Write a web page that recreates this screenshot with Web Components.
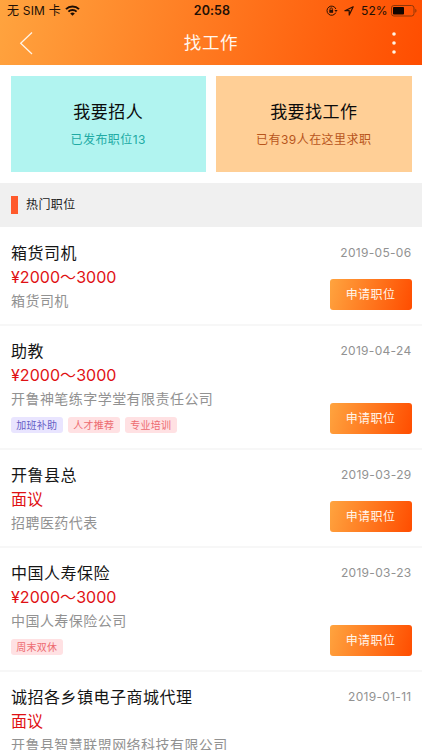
<!DOCTYPE html>
<html lang="zh-CN">
<head>
<meta charset="utf-8">
<title>找工作</title>
<style>
body{margin:0;background:#fff;width:422px;height:750px;overflow:hidden;font-family:Inter,"Noto Sans CJK SC",sans-serif;color:#111}
</style>
</head>
<body>
<job-app></job-app>
<script>
const define = (name, html, setup) => {
  const t = document.createElement('template');
  t.innerHTML = html;
  customElements.define(name, class extends HTMLElement {
    constructor() {
      super();
      this.attachShadow({mode: 'open'}).append(t.content.cloneNode(true));
    }
    connectedCallback() { if (setup) setup(this, this.shadowRoot); }
  });
};

define('status-bar', `
<style>
:host{display:grid;grid-template-columns:1fr auto 1fr;align-items:center;height:21px;padding:0 5px 0 7px;color:#211006;font-size:12px;line-height:20px}
.l,.r{display:flex;align-items:center}
.l{letter-spacing:.2px}
.l svg{margin-left:4px}
.r{justify-content:flex-end}
b{font-weight:600;font-size:12.5px;letter-spacing:.1px}
svg{display:block;flex:none}
</style>
<div class="l"><span>无 SIM 卡</span>
<svg width="15" height="11" viewBox="0 0 15 11" fill="none" stroke="#1c0d04"><path d="M1 4.1a9.2 9.2 0 0 1 13 0" stroke-width="2"/><path d="M3.4 6.7a5.8 5.8 0 0 1 8.2 0" stroke-width="1.8"/><path d="M7.5 10.8 5.2 8.5a3.3 3.3 0 0 1 4.6 0z" fill="#1c0d04" stroke="none"/></svg></div>
<b>20:58</b>
<div class="r">
<svg width="12" height="11" viewBox="0 0 12 11" fill="none" stroke="#2b1003"><path d="M9.8 7.6A4.6 4.6 0 1 1 9.9 4"/><path d="M8.4 5h3.3L10 7z" fill="#2b1003" stroke="none"/><rect x="3.3" y="4.9" width="3.8" height="2.9" fill="#2b1003" stroke="none"/><path d="M4 5V4a1.2 1.2 0 0 1 2.4 0v1" stroke-width=".8"/></svg>
<svg style="margin:0 7px 0 6px" width="10" height="10" viewBox="0 0 10 10" fill="none" stroke="#2b1003" stroke-width="1.2"><path d="M9.2.8.9 4.7h4.3v4.4z" stroke-linejoin="round"/></svg>
<span style="margin-right:3.5px">52%</span>
<svg width="26" height="12" viewBox="0 0 26 12"><rect x=".5" y=".5" width="22.5" height="10.5" rx="2.4" fill="none" stroke="#8f3607"/><rect x="2" y="2" width="11" height="7.5" rx=".8" fill="#120500"/><path d="M24.3 3.7c1.6.6 1.6 3.4 0 4z" fill="#8f3607"/></svg>
</div>`);

define('nav-header', `
<style>
:host{display:block;box-sizing:border-box;height:65px;background:linear-gradient(105deg,#ffa43f,#ff4d00)}
.n{display:grid;grid-template-columns:1fr auto 1fr;align-items:center;height:43px;padding:0 25px 0 19px;color:#fff7ee}
h1{margin:0;font-size:17.5px;font-weight:400;line-height:26px;letter-spacing:.7px;margin-left:6px;padding-top:1px}
.m{justify-self:end}
svg{display:block}
</style>
<status-bar></status-bar>
<div class="n"><svg width="15" height="24" viewBox="0 0 15 24" fill="none" stroke="#fff4e6" stroke-width="1.3"><path d="M13 1.5 1.7 12.2 13 23"/></svg>
<h1><slot></slot></h1>
<svg class="m" width="6" height="24" viewBox="0 0 6 24" fill="#fff4e6"><circle cx="3" cy="3" r="1.8"/><circle cx="3" cy="12" r="1.8"/><circle cx="3" cy="21" r="1.8"/></svg></div>`);

define('entry-card', `
<style>
:host{display:flex;flex-direction:column;align-items:center;box-sizing:border-box;height:96.5px;padding-top:23px;background:var(--bg);color:var(--fg)}
.t{font-size:17px;line-height:27px;letter-spacing:.45px;color:#0b0b0b}
.s{font-size:12px;line-height:20px;letter-spacing:.45px;margin-top:4px}
</style>
<div class="t"><slot></slot></div><div class="s"><slot name="sub"></slot></div>`);

define('section-title', `
<style>
:host{display:flex;align-items:center;gap:8px;height:44px;margin-bottom:1px;padding-left:10.5px;background:#f0f0f0;font-size:12px;letter-spacing:.4px;color:#222}
i{width:7.5px;height:18px;background:#ff5a2c}
span{line-height:18px}
</style><i></i><span><slot></slot></span>`);

define('job-tag', `
<style>
:host{display:block;box-sizing:border-box;height:16px;line-height:16px;width:51.5px;text-align:center;border-radius:3px;font-size:10px;letter-spacing:.3px;background:#ffe1e3;color:#ed6b70}
:host([tone=blue]){background:#e9e5ff;color:#675fc5}
</style><slot></slot>`);

define('job-row', `
<style>
:host{display:flex;justify-content:space-between;box-sizing:border-box;height:98px;padding:13px 10.5px 13.6px 11px;border-bottom:2px solid #f7f7f7}
:host([tall]){height:124px}
:host(:last-of-type){height:126px}
.l{display:flex;flex-direction:column;white-space:nowrap}
.l>div{height:24px;line-height:24px}
.t{font-size:16px;letter-spacing:.5px;color:#151515}
.p{font-size:16px;letter-spacing:.05px;color:#df1114}
.c{font-size:14px;letter-spacing:.45px;color:#929292}
.l>.g{display:flex;gap:5.5px;height:16px;margin-top:6px}
.r{display:flex;flex-direction:column;justify-content:space-between;align-items:flex-end}
.d{font-size:12px;line-height:24px;letter-spacing:.3px;color:#929292}
button{all:unset;box-sizing:border-box;width:82px;height:31px;border-radius:3px;background:linear-gradient(105deg,#ffa43f,#ff4d00);color:#fff5e9;font-size:12px;line-height:31px;letter-spacing:.4px;text-align:center}
</style>
<div class="l"><div class="t"></div><div class="p"></div><div class="c"></div><div class="g"><slot></slot></div></div>
<div class="r"><div class="d"></div><button>申请职位</button></div>`, (el, r) => {
  for (const [c, a] of [['t','name'],['p','pay'],['c','company'],['d','date']])
    r.querySelector('.' + c).textContent = el.getAttribute(a);
});

define('job-app', `
<style>
:host{display:block;height:750px;overflow:hidden;background:#fff}
.e{display:grid;grid-template-columns:1fr 1fr;gap:10px;padding:10.5px 10.5px 11px}
.a{--bg:#b1f4f0;--fg:#20aaa4}
.b{--bg:#ffcf96;--fg:#b8551c}
</style>
<nav-header>找工作</nav-header>
<div class="e">
<entry-card class="a">我要招人<span slot="sub">已发布职位13</span></entry-card>
<entry-card class="b">我要找工作<span slot="sub">已有39人在这里求职</span></entry-card>
</div>
<section-title>热门职位</section-title>
<job-row name="箱货司机" pay="¥2000～3000" company="箱货司机" date="2019-05-06"></job-row>
<job-row tall name="助教" pay="¥2000～3000" company="开鲁神笔练字学堂有限责任公司" date="2019-04-24"><job-tag tone="blue">加班补助</job-tag><job-tag>人才推荐</job-tag><job-tag>专业培训</job-tag></job-row>
<job-row name="开鲁县总" pay="面议" company="招聘医药代表" date="2019-03-29"></job-row>
<job-row tall name="中国人寿保险" pay="¥2000～3000" company="中国人寿保险公司" date="2019-03-23"><job-tag>周末双休</job-tag></job-row>
<job-row tall name="诚招各乡镇电子商城代理" pay="面议" company="开鲁县智慧联盟网络科技有限公司" date="2019-01-11"></job-row>`);
</script>
</body>
</html>
